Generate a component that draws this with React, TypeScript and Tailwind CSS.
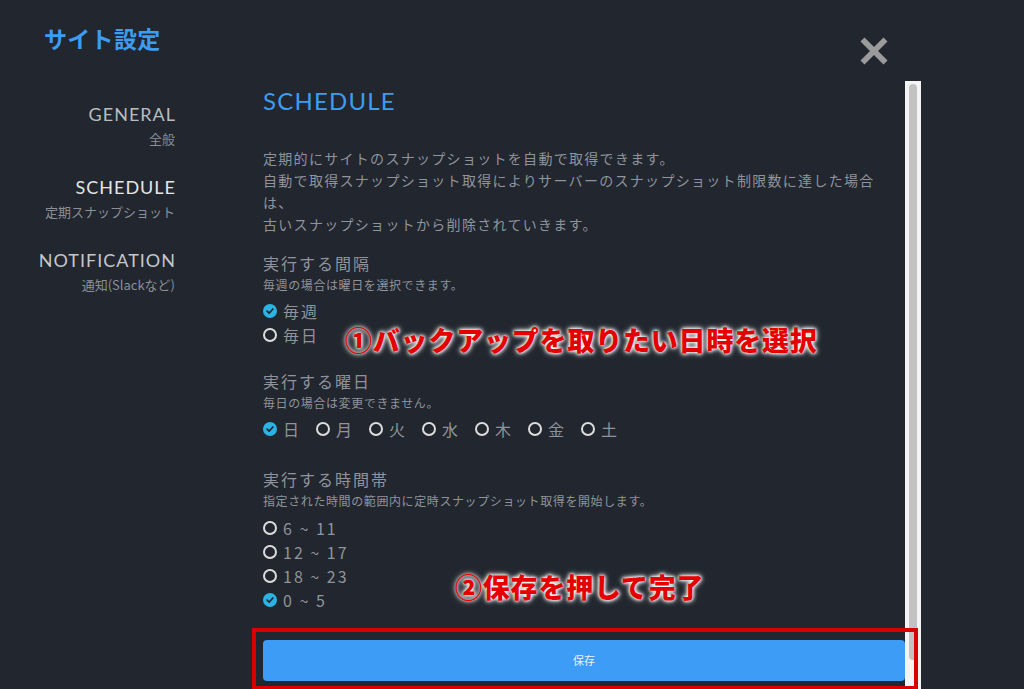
import { X } from 'lucide-react';

const jp = "font-['Noto_Sans_CJK_JP',sans-serif]";
const en = "font-['Lato','Noto_Sans_CJK_JP',sans-serif]";

function Radio({ checked, label }: { checked: boolean; label: string }) {
    return (
        <div className="flex h-[24px] items-center gap-[6px]">
            {checked ? (
                <span className="flex h-[14px] w-[14px] items-center justify-center rounded-full bg-[#2bb3e3]">
                    <svg viewBox="0 0 12 12" className="h-[10px] w-[10px]">
                        <path d="M2.5 6.2 L5 8.5 L9.5 3.6" fill="none" stroke="#1f2530" strokeWidth="2" strokeLinecap="round" strokeLinejoin="round" />
                    </svg>
                </span>
            ) : (
                <span className="h-[14px] w-[14px] rounded-full border-[2.5px] border-[#dcdcdc]" />
            )}
            <span className="text-[16px] leading-[24px] tracking-[2px] text-[#8f949c]">{label}</span>
        </div>
    );
}

function Section({ title, note, className, children }: { title: string; note: string; className: string; children: React.ReactNode }) {
    return (
        <div className={className}>
            <h3 className="text-[16px] leading-[22px] tracking-[2px] text-[#8f949c]">{title}</h3>
            <p className="mt-[2px] text-[12px] leading-[18px] tracking-[0.6px] text-[#8f949c]">{note}</p>
            {children}
        </div>
    );
}

export default function App() {
    const nav = [
        { en: 'GENERAL', jp: '全般', color: 'text-[#b9bcc1]' },
        { en: 'SCHEDULE', jp: '定期スナップショット', color: 'text-[#e4e5e7]' },
        { en: 'NOTIFICATION', jp: '通知(Slackなど)', color: 'text-[#c4c7cc]' },
    ];
    const days = ['日', '月', '火', '水', '木', '金', '土'];
    const times = ['6 ~ 11', '12 ~ 17', '18 ~ 23', '0 ~ 5'];

    return (
        <div className={`relative flex h-[689px] w-[1024px] overflow-hidden bg-[#22262e] ${jp}`}>
            {/* Sidebar */}
            <aside className="w-[175px] shrink-0 pl-[44px]">
                <h1 className="pt-[22px] text-[23px] font-bold leading-[32px] tracking-[0.3px] text-[#3c9cf0]">サイト設定</h1>
                <nav className="mt-[48px] flex flex-col items-end gap-[25px]">
                    {nav.map((item) => (
                        <div key={item.en} className="flex flex-col items-end">
                            <span className={`${en} mr-[-1px] text-[18px] leading-[24px] tracking-[1px] ${item.color}`}>{item.en}</span>
                            <span className="mt-[2px] text-[13px] leading-[22px] text-[#8a8f98]">{item.jp}</span>
                        </div>
                    ))}
                </nav>
            </aside>

            {/* Main */}
            <main className="ml-[88px] flex w-[658px] flex-col">
                <div className="flex h-[81px] items-start justify-end pr-[28px] pt-[32px]">
                    <X className="h-[38px] w-[38px] text-[#9b9b9b]" strokeWidth={3.6} strokeLinecap="square" />
                </div>
                <div className="flex flex-1">
                    <div className="w-[642px]">
                        <h2 className={`${en} mt-[6px] text-[24px] leading-[28px] tracking-[1.2px] text-[#3c9cf0]`}>SCHEDULE</h2>
                        <div className="mt-[32px] whitespace-nowrap text-[14px] leading-[22px] tracking-[1.3px] text-[#8f949c]">
                            <p>定期的にサイトのスナップショットを自動で取得できます。</p>
                            <p>自動で取得スナップショット取得によりサーバーのスナップショット制限数に達した場合</p>
                            <p>は、</p>
                            <p>古いスナップショットから削除されていきます。</p>
                        </div>

                        <Section className="mt-[17px]" title="実行する間隔" note="毎週の場合は曜日を選択できます。">
                            <div className="mt-[5px]">
                                <Radio checked label="毎週" />
                                <Radio checked={false} label="毎日" />
                            </div>
                        </Section>

                        <Section className="mt-[23px]" title="実行する曜日" note="毎日の場合は変更できません。">
                            <div className="mt-[5px] flex gap-[15px]">
                                {days.map((d, i) => (
                                    <Radio key={d} checked={i === 0} label={d} />
                                ))}
                            </div>
                        </Section>

                        <Section className="mt-[27px]" title="実行する時間帯" note="指定された時間の範囲内に定時スナップショット取得を開始します。">
                            <div className="mt-[6px]">
                                {times.map((t, i) => (
                                    <Radio key={t} checked={i === 3} label={t} />
                                ))}
                            </div>
                        </Section>

                        <button className="mt-[28px] h-[41px] w-full rounded-[4px] bg-[#3d9cf6] text-[11px] text-[#eaf3fd]">保存</button>
                    </div>
                    {/* Scrollbar */}
                    <div className="flex w-[16px] justify-center bg-[#f4f4f4] pt-[3px]">
                        <div className="h-[576px] w-[8px] rounded-full bg-[#c2c2c2]" />
                    </div>
                </div>
            </main>

            {/* Annotations */}
            <div className="absolute left-[345px] top-[322px] text-[27px] font-black leading-[36px] tracking-[0.8px] text-[#e50000] [text-shadow:0_0_3px_#fff,0_0_4px_#fff,0_0_6px_#fff]">
                ①バックアップを取りたい日時を選択
            </div>
            <div className="absolute left-[455px] top-[569px] text-[27px] font-black leading-[36px] tracking-[0.8px] text-[#e50000] [text-shadow:0_0_3px_#fff,0_0_4px_#fff,0_0_6px_#fff]">
                ②保存を押して完了
            </div>
            <div className="absolute left-[252px] top-[628px] h-[62px] w-[666px] border-[4px] border-[#d80000]" />
        </div>
    );
}
